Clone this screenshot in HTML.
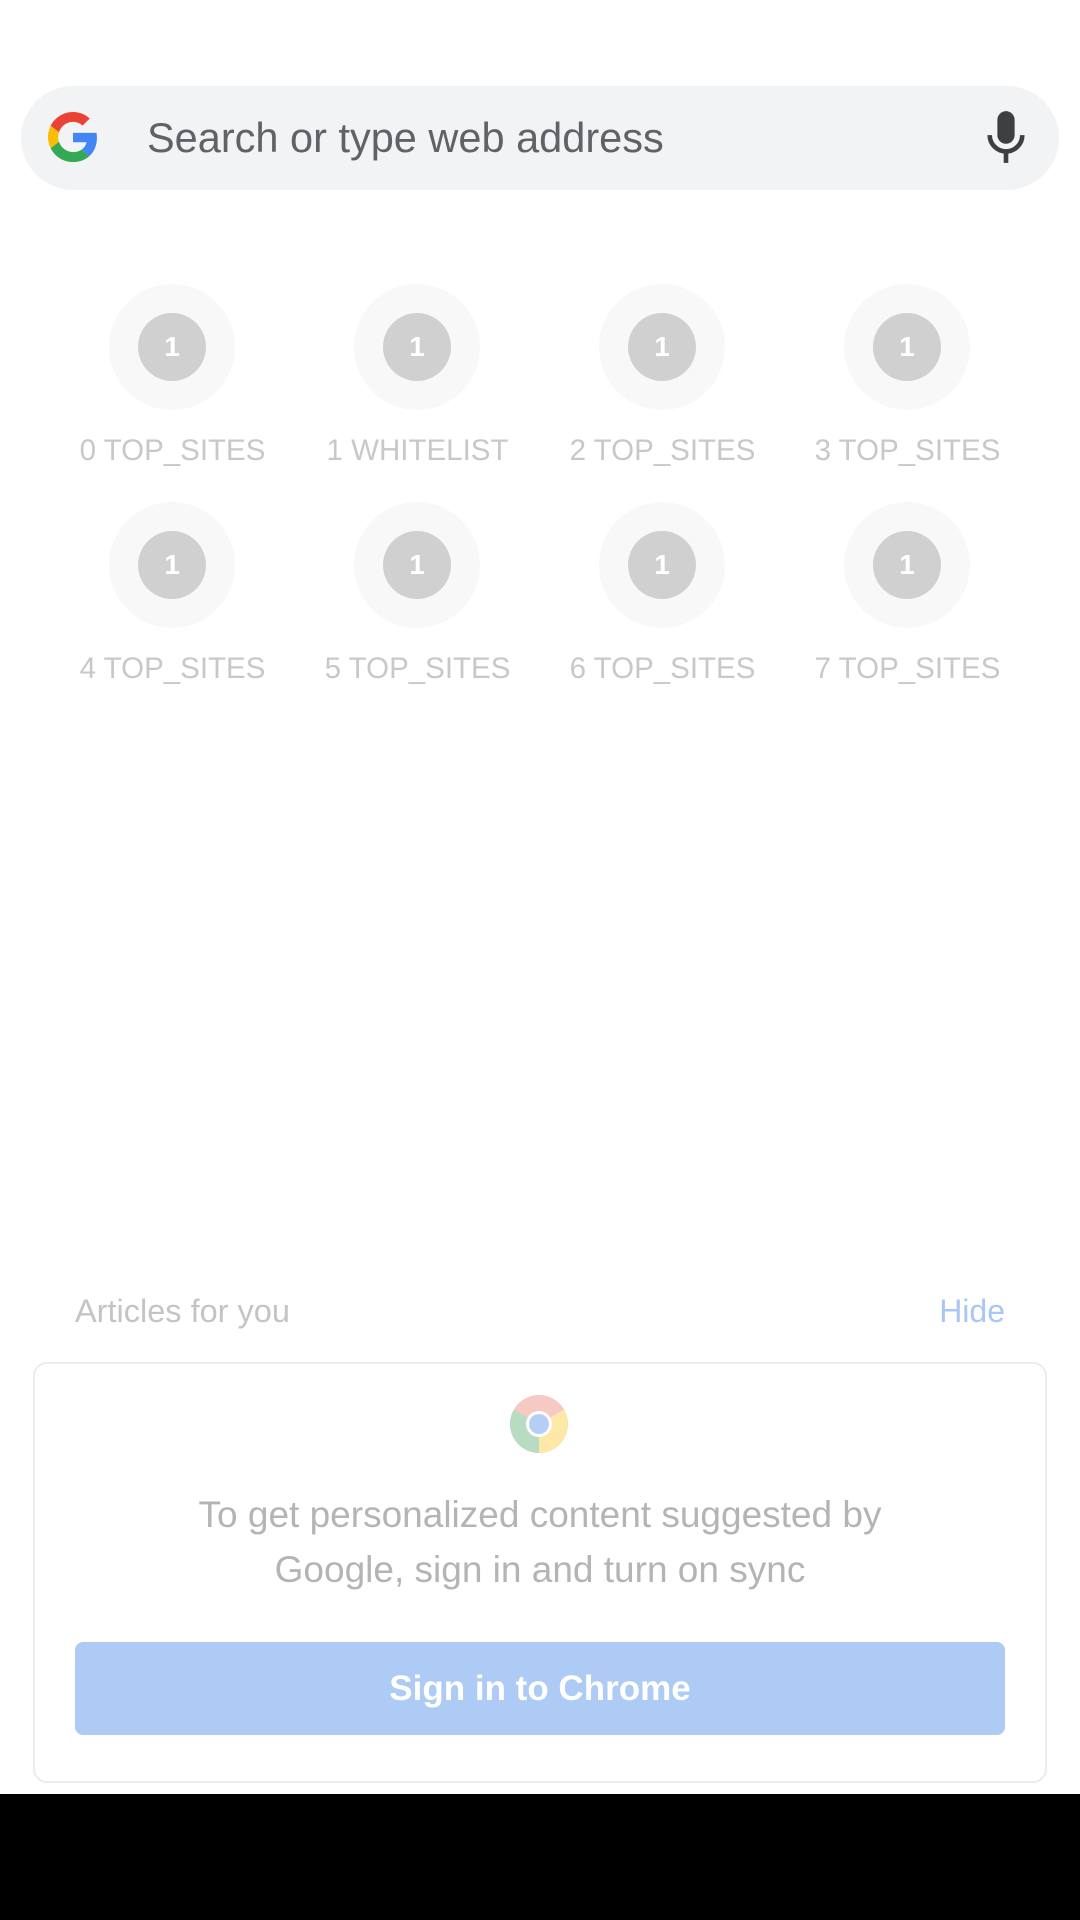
<!DOCTYPE html>
<html><head><style>
body{margin:0;width:1080px;height:1920px;background:#fff;position:relative;overflow:hidden;font-family:"Liberation Sans",Roboto,sans-serif}
.bar{position:absolute;left:21px;top:86px;width:1038px;height:104px;border-radius:52px;background:#f1f3f4}
.ph{position:absolute;left:147px;top:115px;font-size:41.5px;color:#5f6368;line-height:46px}
.tile{position:absolute;width:126px;height:126px;border-radius:50%;background:#f8f8f8}
.tile div{position:absolute;left:29px;top:29px;width:68px;height:68px;border-radius:50%;background:#d0d0d0;color:#fff;font-size:28px;font-weight:bold;line-height:68px;text-align:center}
.lab{position:absolute;width:245px;text-align:center;font-size:29.5px;color:#c8c8c8;line-height:34px}
.card{position:absolute;left:33px;top:1362px;width:1014px;height:421px;border:2px solid #ececec;border-radius:14px;box-sizing:border-box}
</style></head><body>
<div class="bar"></div>
<svg style="position:absolute;left:48px;top:112px" width="50" height="50" viewBox="0 0 48 48">
<path fill="#EA4335" d="M24 9.5c3.54 0 6.710 1.22 9.21 3.6l6.85-6.85C35.9 2.38 30.47 0 24 0 14.62 0 6.51 5.38 2.56 13.22l7.98 6.19C12.43 13.72 17.740 9.5 24 9.5z"/>
<path fill="#4285F4" d="M46.98 24.55c0-1.57-.15-3.09-.38-4.55H24v9.02h12.94c-.58 2.96-2.26 5.48-4.78 7.18l7.73 6c4.51-4.18 7.09-10.36 7.09-17.65z"/>
<path fill="#FBBC05" d="M10.53 28.59c-.48-1.45-.76-2.99-.76-4.590s.27-3.14.76-4.59l-7.98-6.19C.92 16.46 0 20.12 0 24c0 3.88.92 7.54 2.56 10.78l7.97-6.19z"/>
<path fill="#34A853" d="M24 48c6.48 0 11.93-2.13 15.89-5.81l-7.73-6c-2.15 1.45-4.92 2.3-8.16 2.3-6.26 0-11.57-4.22-13.47-9.91l-7.98 6.19C6.51 42.62 14.62 48 24 48z"/>
</svg>
<div class="ph">Search or type web address</div>
<svg style="position:absolute;left:983px;top:109px" width="46" height="58" viewBox="0 0 24 30">
<rect x="7.5" y="1" width="9" height="17" rx="4.5" fill="#3c4043"/>
<path d="M3.5 13.5a8.5 8.5 0 0 0 17 0" stroke="#3c4043" stroke-width="2.4" fill="none"/>
<rect x="10.8" y="21" width="2.4" height="7" fill="#3c4043"/>
</svg>

<div class="tile" style="left:109px;top:284px"><div>1</div></div>
<div class="tile" style="left:354px;top:284px"><div>1</div></div>
<div class="tile" style="left:599px;top:284px"><div>1</div></div>
<div class="tile" style="left:844px;top:284px"><div>1</div></div>
<div class="lab" style="left:50px;top:434px">0 TOP_SITES</div>
<div class="lab" style="left:295px;top:434px">1 WHITELIST</div>
<div class="lab" style="left:540px;top:434px">2 TOP_SITES</div>
<div class="lab" style="left:785px;top:434px">3 TOP_SITES</div>
<div class="tile" style="left:109px;top:502px"><div>1</div></div>
<div class="tile" style="left:354px;top:502px"><div>1</div></div>
<div class="tile" style="left:599px;top:502px"><div>1</div></div>
<div class="tile" style="left:844px;top:502px"><div>1</div></div>
<div class="lab" style="left:50px;top:652px">4 TOP_SITES</div>
<div class="lab" style="left:295px;top:652px">5 TOP_SITES</div>
<div class="lab" style="left:540px;top:652px">6 TOP_SITES</div>
<div class="lab" style="left:785px;top:652px">7 TOP_SITES</div>

<div style="position:absolute;left:75px;top:1293px;font-size:32.5px;color:#c4c4c4">Articles for you</div>
<div style="position:absolute;right:75px;top:1293px;font-size:32px;color:#a9c6f5">Hide</div>
<div class="card"></div>
<svg style="position:absolute;left:510px;top:1395px" width="58" height="58" viewBox="0 0 58 58">
<circle cx="29" cy="29" r="29" fill="#f6c9c5"/>
<path d="M29 29 L54.1 43.5 A29 29 0 0 1 29 58 Z" fill="#fde8a8"/>
<path d="M29 29 L54.1 14.5 A29 29 0 0 1 54.1 43.5 Z" fill="#fde8a8"/>
<path d="M29 29 L29 58 A29 29 0 0 1 3.9 14.5 Z" fill="#b7dcc2"/>
<circle cx="29" cy="29" r="13" fill="#fff"/>
<circle cx="29" cy="29" r="10" fill="#b6cdf6"/>
</svg>
<div style="position:absolute;left:0;width:1080px;top:1487px;text-align:center;font-size:37px;line-height:55px;color:#b4b4b4">To get personalized content suggested by<br>Google, sign in and turn on sync</div>
<div style="position:absolute;left:75px;top:1642px;width:930px;height:93px;border-radius:8px;background:#aecbf5;color:#fff;font-size:35px;font-weight:bold;text-align:center;line-height:93px">Sign in to Chrome</div>
<div style="position:absolute;left:0;top:1794px;width:1080px;height:126px;background:#000"></div>
</body></html>
